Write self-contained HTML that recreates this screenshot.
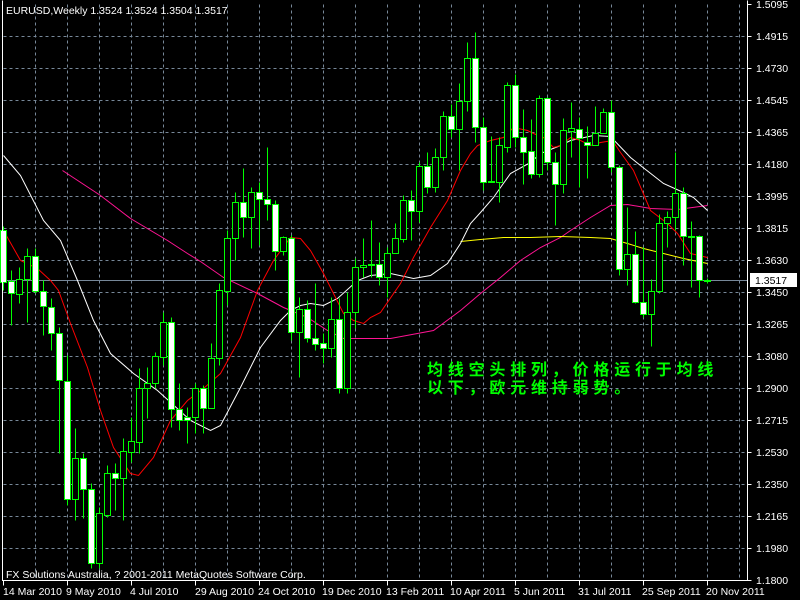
<!DOCTYPE html>
<html><head><meta charset="utf-8"><style>
html,body{margin:0;padding:0;background:#000;width:800px;height:600px;overflow:hidden}
svg{display:block}
text{font-family:"Liberation Sans",sans-serif;font-size:10.5px;fill:#fff}
.cn{font-family:"Liberation Sans","Noto Sans CJK SC","WenQuanYi Zen Hei",sans-serif;font-size:16px;fill:#00ff00;letter-spacing:4.8px;font-weight:bold}
</style></head><body>
<svg width="800" height="600" viewBox="0 0 800 600" xmlns="http://www.w3.org/2000/svg">
<rect width="800" height="600" fill="#000"/>
<g transform="translate(0.5,0.5)">
<g stroke="#778899" stroke-width="1" stroke-dasharray="3,3" fill="none">
<path d="M35 4V580M67 4V580M99 4V580M131 4V580M163 4V580M195 4V580M227 4V580M259 4V580M291 4V580M323 4V580M355 4V580M387 4V580M419 4V580M451 4V580M483 4V580M515 4V580M547 4V580M579 4V580M611 4V580M643 4V580M675 4V580M707 4V580M739 4V580"/>
<path d="M3 36H747M3 68H747M3 100H747M3 132H747M3 164H747M3 196H747M3 228H747M3 260H747M3 292H747M3 324H747M3 356H747M3 388H747M3 420H747M3 452H747M3 484H747M3 516H747M3 548H747"/>
</g>
<line x1="3" y1="280" x2="747" y2="280" stroke="#778899"/>
<g fill="none" stroke-width="1">
<polyline stroke="#ff1493" points="62,170 100,195 130,218 167,240 187,253 200,261 223,277 257,293 283,307 307,317 327,330 343,338 390,338 433,330 460,310 480,293 500,277 520,260 540,247 560,237 570,230 590,217 610,205 627,204 650,208 677,209 707,205"/>
<polyline stroke="#ffff00" points="460,241 480,239 503,237 530,237 560,236 590,237 610,238 627,243 643,248 663,253 683,258 707,263"/>
<polyline stroke="#ffffff" points="3,155 20,175 43,220 60,240 77,280 93,320 110,353 133,373 157,390 190,420 210,430 220,425 240,387 260,347 280,320 290,310 300,305 310,303 323,305 337,298 357,280 370,275 390,273 413,278 430,275 447,263 460,243 470,223 480,212 493,197 500,187 510,173 530,162 540,153 560,145 570,140 593,135 610,136 630,157 640,165 663,183 683,192 693,197 707,210"/>
<polyline stroke="#ff0000" points="3,230 20,260 37,268 50,280 58,290 70,323 87,367 100,410 113,447 130,473 138,475 153,457 170,420 187,400 203,388 220,373 240,337 257,290 273,260 290,237 300,238 310,250 323,273 333,293 343,313 353,320 363,323 370,317 380,312 400,283 413,257 430,227 447,200 460,170 470,153 477,145 490,140 503,137 513,127 527,130 533,133 543,137 553,147 560,145 570,137 580,140 590,145 600,142 612,140 620,152 633,170 650,210 667,223 677,233 690,253 707,257"/>
</g>
<g stroke="#00ff00" stroke-width="1">
<path d="M3 226V290M11 270V325M19 267V303M27 248V322M35 248V293M43 280V335M51 298V350M59 327V453M67 355V505M75 428V520M83 453V518M91 483V568M99 507V568M107 465V517M115 463V510M123 438V520M131 417V462M139 368V453M147 367V418M155 352V388M163 312V365M171 317V427M179 383V430M187 407V443M195 383V433M203 385V433M211 343V408M219 283V365M227 230V305M235 192V260M243 168V237M251 187V248M259 182V245M267 147V220M275 200V270M283 236V255M291 235V340M299 297V377M307 300V342M315 283V350M323 333V363M331 297V357M339 298V393M347 292V393M355 258V328M363 238V277M371 220V277M379 242V285M387 247V297M395 223V253M403 195V242M411 190V240M419 162V222M427 152V193M435 148V192M443 111V170M451 104V137M459 83V170M467 42V111M475 32V142M483 117V190M491 136V182M499 137V202M507 82V152M515 74V147M523 109V184M531 119V178M539 95V177M547 97V170M555 152V225M563 118V193M571 102V157M579 117V187M587 126V178M595 106V145M603 108V133M611 100V172M619 165V275M627 207V285M635 231V303M643 247V317M651 279V346M659 214V293M667 211V247M675 152V230M683 187V265M691 221V287M699 235V297M707 278V283"/>
<g fill="#fff">
<rect x="0" y="230" width="6" height="52"/><rect x="8" y="281" width="6" height="12"/><rect x="32" y="256" width="6" height="35"/><rect x="40" y="291" width="6" height="15"/><rect x="48" y="307" width="6" height="26"/><rect x="56" y="333" width="6" height="47"/><rect x="64" y="381" width="6" height="118"/><rect x="80" y="458" width="6" height="31"/><rect x="88" y="489" width="6" height="74"/><rect x="112" y="473" width="6" height="5"/><rect x="168" y="322" width="6" height="87"/><rect x="176" y="409" width="6" height="11"/><rect x="184" y="417" width="6" height="3"/><rect x="200" y="388" width="6" height="20"/><rect x="240" y="202" width="6" height="15"/><rect x="256" y="192" width="6" height="7"/><rect x="264" y="199" width="6" height="5"/><rect x="272" y="204" width="6" height="47"/><rect x="288" y="238" width="6" height="94"/><rect x="304" y="309" width="6" height="29"/><rect x="312" y="338" width="6" height="6"/><rect x="320" y="343" width="6" height="5"/><rect x="336" y="319" width="6" height="69"/><rect x="376" y="264" width="6" height="13"/><rect x="408" y="200" width="6" height="11"/><rect x="424" y="166" width="6" height="21"/><rect x="448" y="116" width="6" height="13"/><rect x="472" y="58" width="6" height="69"/><rect x="480" y="127" width="6" height="55"/><rect x="512" y="85" width="6" height="52"/><rect x="520" y="137" width="6" height="15"/><rect x="528" y="151" width="6" height="23"/><rect x="544" y="98" width="6" height="64"/><rect x="552" y="162" width="6" height="22"/><rect x="576" y="129" width="6" height="9"/><rect x="584" y="142" width="6" height="3"/><rect x="608" y="112" width="6" height="55"/><rect x="616" y="167" width="6" height="102"/><rect x="632" y="254" width="6" height="48"/><rect x="640" y="302" width="6" height="12"/><rect x="680" y="193" width="6" height="43"/><rect x="696" y="236" width="6" height="44"/>
</g>
<g fill="#000">
<rect x="16" y="279" width="6" height="15"/><rect x="24" y="256" width="6" height="23"/><rect x="72" y="458" width="6" height="41"/><rect x="96" y="513" width="6" height="50"/><rect x="104" y="473" width="6" height="42"/><rect x="120" y="451" width="6" height="27"/><rect x="128" y="441" width="6" height="11"/><rect x="136" y="388" width="6" height="54"/><rect x="144" y="383" width="6" height="5"/><rect x="152" y="356" width="6" height="27"/><rect x="160" y="322" width="6" height="35"/><rect x="192" y="388" width="6" height="29"/><rect x="208" y="358" width="6" height="50"/><rect x="216" y="290" width="6" height="68"/><rect x="224" y="238" width="6" height="53"/><rect x="232" y="202" width="6" height="36"/><rect x="248" y="192" width="6" height="25"/><rect x="280" y="237" width="6" height="14"/><rect x="296" y="309" width="6" height="23"/><rect x="328" y="319" width="6" height="29"/><rect x="344" y="312" width="6" height="76"/><rect x="352" y="267" width="6" height="45"/><rect x="360" y="265" width="6" height="2"/><rect x="368" y="264" width="6" height="1"/><rect x="384" y="253" width="6" height="24"/><rect x="392" y="238" width="6" height="15"/><rect x="400" y="200" width="6" height="39"/><rect x="416" y="166" width="6" height="45"/><rect x="432" y="157" width="6" height="30"/><rect x="440" y="116" width="6" height="41"/><rect x="456" y="101" width="6" height="28"/><rect x="464" y="58" width="6" height="43"/><rect x="488" y="181" width="6" height="1"/><rect x="496" y="145" width="6" height="37"/><rect x="504" y="85" width="6" height="62"/><rect x="536" y="98" width="6" height="76"/><rect x="560" y="130" width="6" height="54"/><rect x="568" y="128" width="6" height="3"/><rect x="592" y="133" width="6" height="12"/><rect x="600" y="112" width="6" height="21"/><rect x="624" y="254" width="6" height="15"/><rect x="648" y="291" width="6" height="23"/><rect x="656" y="223" width="6" height="68"/><rect x="664" y="217" width="6" height="6"/><rect x="672" y="193" width="6" height="24"/><rect x="688" y="236" width="6" height="1" fill="#00ff00"/><rect x="704" y="280" width="6" height="1" fill="#00ff00"/>
</g>
</g>
<g stroke="#fff" fill="none">
<path d="M2 0V580H747V0"/>
<path d="M747 4h4M747 36h4M747 68h4M747 100h4M747 132h4M747 164h4M747 196h4M747 228h4M747 260h4M747 292h4M747 324h4M747 356h4M747 388h4M747 420h4M747 452h4M747 484h4M747 516h4M747 548h4M747 580h4"/>
<path d="M3 580v5M67 580v5M131 580v5M195 580v5M259 580v5M323 580v5M387 580v5M451 580v5M515 580v5M579 580v5M643 580v5M707 580v5"/>
</g>
</g>
<rect x="750" y="273" width="47" height="14" fill="#fff"/>
<text x="755" y="284" style="fill:#000">1.3517</text>
<g>
<text x="756" y="8">1.5095</text><text x="756" y="40">1.4915</text><text x="756" y="72">1.4730</text><text x="756" y="104">1.4545</text><text x="756" y="136">1.4365</text><text x="756" y="168">1.4180</text><text x="756" y="200">1.3995</text><text x="756" y="232">1.3815</text><text x="756" y="264">1.3630</text><text x="756" y="296">1.3450</text><text x="756" y="328">1.3265</text><text x="756" y="360">1.3080</text><text x="756" y="392">1.2900</text><text x="756" y="424">1.2715</text><text x="756" y="456">1.2530</text><text x="756" y="488">1.2350</text><text x="756" y="520">1.2165</text><text x="756" y="552">1.1980</text><text x="756" y="584">1.1800</text>
</g>
<g>
<text x="3" y="595">14 Mar 2010</text><text x="66" y="595">9 May 2010</text><text x="130" y="595">4 Jul 2010</text><text x="195" y="595">29 Aug 2010</text><text x="258" y="595">24 Oct 2010</text><text x="322" y="595">19 Dec 2010</text><text x="386" y="595">13 Feb 2011</text><text x="450" y="595">10 Apr 2011</text><text x="514" y="595">5 Jun 2011</text><text x="578" y="595">31 Jul 2011</text><text x="642" y="595">25 Sep 2011</text><text x="706" y="595">20 Nov 2011</text>
</g>
<text x="6" y="14">EURUSD,Weekly  1.3524 1.3524 1.3504 1.3517</text>
<text x="6" y="578">FX Solutions Australia, ? 2001-2011 MetaQuotes Software Corp.</text>
<text class="cn" x="427" y="375">均线空头排列，价格运行于均线</text>
<text class="cn" x="427" y="393">以下，欧元维持弱势。</text>
</svg>
</body></html>
